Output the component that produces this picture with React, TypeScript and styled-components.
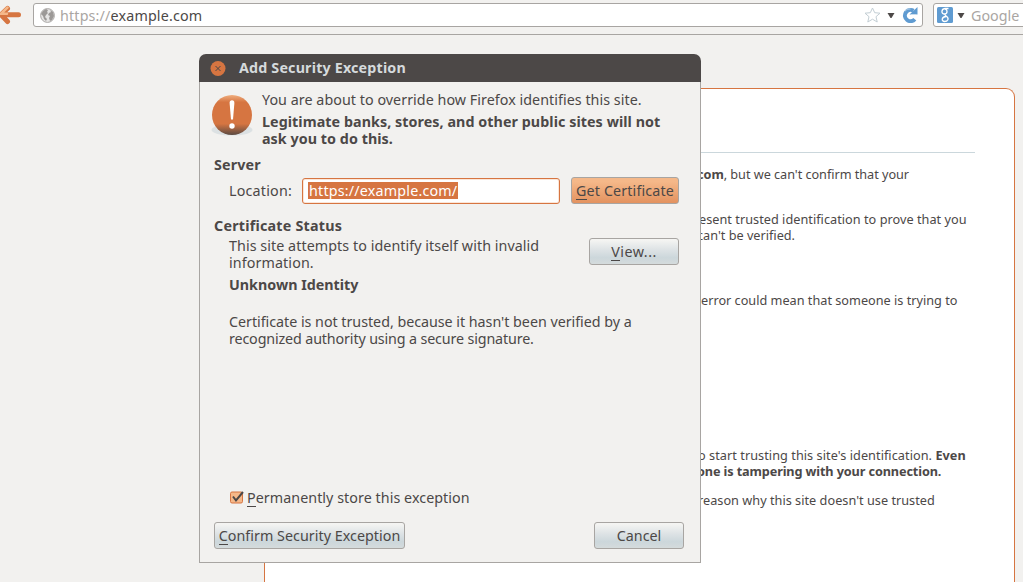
import React from "react";
import styled, { createGlobalStyle, css } from "styled-components";

const color = {
  ink: "#4c4847",
  muted: "#aaa6a3",
  panel: "#f2f1ef",
  orange: "#d67541",
  peach: "#f5b889",
  mist: "#cbd7dc",
  edge: "#a8a5a2",
  blue: "#5f9bd1",
};

const Global = createGlobalStyle`
  body { margin: 0; background: ${color.panel}; overflow: hidden; }
  * { box-sizing: border-box; }
`;

const Screen = styled.div`
  position: relative;
  width: 1023px;
  height: 582px;
  overflow: hidden;
  display: flex;
  flex-direction: column;
  background: ${color.panel};
  color: ${color.ink};
  font-family: "Noto Sans", "Open Sans", sans-serif;
  font-size: 14.3px;
  line-height: 17px;
`;

const Line = styled.div<{ $track?: number; $bold?: boolean; $indent?: number }>`
  white-space: pre;
  font-weight: ${(p) => (p.$bold ? 700 : 400)};
  letter-spacing: ${(p) => p.$track ?? 0}px;
  margin-left: ${(p) => p.$indent ?? 0}px;
`;

const Toolbar = styled.header`
  display: flex;
  flex: none;
  height: 35px;
  padding-top: 3px;
  border-bottom: 1px solid ${color.edge};
`;

const BackArrow = styled.svg`
  width: 22px;
  height: 20px;
  margin: 2px 11px 0 0;
  flex: none;
`;

const Field = styled.div<{ $width: number }>`
  display: flex;
  flex: none;
  align-items: center;
  width: ${(p) => p.$width}px;
  height: 24px;
  background: #fff;
  border: 1px solid ${color.edge};
  border-radius: 3px;
`;

const UrlField = styled(Field)`
  padding: 0 4px 0 6px;
  margin-right: 10px;
`;

const SearchField = styled(Field)`
  padding-left: 3px;
`;

const Muted = styled.span`
  color: ${color.muted};
`;

const Spacer = styled.div`
  flex: 1;
`;

const Glyph = styled.svg<{ $gap?: number }>`
  display: block;
  flex: none;
  margin-right: ${(p) => p.$gap ?? 0}px;
`;

const Page = styled.main`
  flex: 1;
  display: flex;
  padding: 53px 8px 0 264px;
`;

const ErrorCard = styled.section`
  flex: 1;
  background: #fff;
  border: 1px solid ${color.orange};
  border-bottom: 0;
  border-radius: 9px 9px 0 0;
  padding: 63px 39px 0 40px;
  font-size: 12.7px;
  line-height: 16px;
`;

const Heading = styled.div`
  border-top: 1px solid ${color.mist};
  height: 14px;
`;

const Paragraph = styled.div<{ $after: number }>`
  padding-left: 390px;
  margin-bottom: ${(p) => p.$after}px;
`;

const Dialog = styled.section`
  position: absolute;
  left: 199px;
  top: 54px;
  width: 502px;
  height: 509px;
  display: flex;
  flex-direction: column;
`;

const TitleBar = styled.div`
  display: flex;
  align-items: center;
  flex: none;
  height: 28px;
  padding: 0 0 1px 11px;
  background: ${color.ink};
  border-radius: 7px 7px 0 0;
  color: #d5dadc;
`;

const Body = styled.div`
  flex: 1;
  display: flex;
  flex-direction: column;
  padding: 9px 16px 13px 14px;
  background: ${color.panel};
  border: 1px solid ${color.edge};
  border-top: 0;
`;

const Row = styled.div<{ $top?: number }>`
  display: flex;
  margin-top: ${(p) => p.$top ?? 0}px;
`;

const Intro = styled(Row)`
  margin-left: -3px;
  height: 56px;
`;

const IntroText = styled.div`
  display: flex;
  flex-direction: column;
  gap: 5px;
`;

const Block = styled.div<{ $top: number; $indent?: number }>`
  margin-top: ${(p) => p.$top}px;
  margin-left: ${(p) => p.$indent ?? 0}px;
`;

const LocationRow = styled(Row)`
  height: 27px;
  align-items: center;
  padding-left: 15px;
`;

const LocationLabel = styled.div`
  width: 73px;
`;

const LocationInput = styled.div`
  width: 258px;
  height: 26px;
  margin: 1px 11px 0 0;
  padding: 3px 5px 0;
  border: 1px solid ${color.orange};
  border-radius: 3px;
  background: #fff;
  box-shadow: inset 0 0 0 1px #fbe6d8;
`;

const Selection = styled.div`
  width: 150px;
  height: 17px;
  padding-left: 1px;
  background: ${color.orange};
  color: #fff;
`;

const Button = styled.button<{ $width: number; $primary?: boolean }>`
  flex: none;
  width: ${(p) => p.$width}px;
  height: 27px;
  padding: 0;
  display: flex;
  justify-content: center;
  align-items: center;
  border: 1px solid ${color.edge};
  border-radius: 3px;
  color: ${color.ink};
  font: inherit;
  ${(p) =>
    p.$primary
      ? css`
          background: linear-gradient(${color.peach} 15%, #e3925f 100%);
        `
      : css`
          background: linear-gradient(#f4f4f2 5%, #dfe4e6 40%, #ccd7db 75%, #d5dbdc 100%);
        `}
`;

const Key = styled.span`
  box-shadow: 0 -1px 0 ${color.ink} inset;
`;

const StatusText = styled.div`
  width: 360px;
`;

const Warning = () => (
  <Glyph width="42" height="46" viewBox="0 -1 42 46" $gap={9}>
    <defs>
      <linearGradient id="ball" x1="0" y1="0" x2="0" y2="1">
        <stop offset="0" stopColor="#f0ae7e" />
        <stop offset=".18" stopColor="#d67541" />
        <stop offset=".72" stopColor="#d67541" />
        <stop offset="1" stopColor="#5b4a42" />
      </linearGradient>
    </defs>
    <ellipse cx="21" cy="38" rx="20.500" ry="5.500" fill="#dce1e3" />
    <circle cx="21" cy="23" r="20" fill="url(#ball)" />
    <path d="M18.600 11a2.400 2.800 0 0 1 4.800 0L22 27.500h-2z" fill="#fff" />
    <circle cx="21" cy="34" r="2.700" fill="#fff" />
  </Glyph>
);

const DropArrow = ({ gap }: { gap: number }) => (
  <Glyph width="8" height="6" viewBox="0 -.5 8 6" $gap={gap}>
    <path d="M.5.5h7L4.500 5.500h-1z" fill={color.ink} />
  </Glyph>
);

export default function App() {
  return (
    <Screen>
      <Global />
      <Toolbar>
        <BackArrow viewBox="0 0 22 20">
          <path d="M7.500 3.500L1 9.800l6.500 6.700M3 9.800h15.500" fill="none" stroke={color.orange} strokeWidth="5" strokeLinecap="round" strokeLinejoin="round" />
          <path d="M7.500 2.500L1 8.800h6" fill="none" stroke={color.peach} strokeWidth="2.500" strokeLinecap="round" />
        </BackArrow>
        <UrlField $width={890}>
          <Glyph width="15" height="15" viewBox="0 0 15 15" $gap={5}>
            <circle cx="7.500" cy="7.500" r="6.900" fill="#e6e5e4" stroke="#aaa7a5" strokeWidth="1" />
            <path d="M1 6l2-3 3-2 2 1-1 2 1 1-2 2-1 2 2 2-1 2-2-2-1-3zM10 2l3 2 1 4-2 4-2 1-1-3 1-2-2-1 1-2 2-1z" fill="#9c9997" />
          </Glyph>
          <Line $track={0.16}><Muted>https://</Muted>example.com</Line>
          <Spacer />
          <Glyph width="17" height="16" viewBox="0 0 17 16" $gap={6}>
            <path d="M8.500 1l2.200 4.700 5.300.5-4 3.500 1.200 5.300-4.700-2.800L3.800 15 5 9.700 1 6.200l5.300-.5z" fill="#fff" stroke="#c3ced4" />
          </Glyph>
          <DropArrow gap={7} />
          <Glyph width="16" height="16" viewBox="0 0 16 16">
            <path d="M12.800 12.200A5.600 5.600 0 1 1 11.500 3.800" fill="none" stroke={color.blue} strokeWidth="4" />
            <path d="M15.500 0v7.500H7.500z" fill={color.blue} />
            <path d="M3 4.200C4.500 2.300 6.500 1.700 8.500 2M9 7.500h5.500" stroke="#cfe0ee" fill="none" strokeWidth=".8" />
          </Glyph>
        </UrlField>
        <SearchField $width={110}>
          <Glyph width="16" height="16" viewBox="0 0 16 16" $gap={4}>
            <rect width="16" height="16" rx="1.500" fill={color.blue} />
            <path d="M11.500 1.500H8C4 2 4 7 7.500 7c3.500 0 3-5 .5-5M7.500 7l1.500 2c4 2.500 1.500 5.500-1.500 5.500S4 10 9 9.500" fill="none" stroke="#fff" strokeWidth="1.300" />
          </Glyph>
          <DropArrow gap={6} />
          <Line><Muted>Google</Muted></Line>
        </SearchField>
      </Toolbar>

      <Page>
        <ErrorCard>
          <Heading />
          <Paragraph $after={29}>
            <Line $indent={2} $track={-0.04}><b>com</b>, but we can't confirm that your</Line>
          </Paragraph>
          <Paragraph $after={49}>
            <Line $indent={4} $track={0.03}>esent trusted identification to prove that you</Line>
            <Line $indent={2}>can't be verified.</Line>
          </Paragraph>
          <Paragraph $after={139}>
            <Line $indent={6}>error could mean that someone is trying to</Line>
          </Paragraph>
          <Paragraph $after={13}>
            <Line $indent={3} $track={0.05}>o start trusting this site's identification. <b>Even</b></Line>
            <Line $indent={2} $track={-0.12} $bold>one is tampering with your connection.</Line>
          </Paragraph>
          <Paragraph $after={0}>
            <Line $indent={3} $track={0.02}>reason why this site doesn't use trusted</Line>
          </Paragraph>
        </ErrorCard>
      </Page>

      <Dialog>
        <TitleBar>
          <Glyph width="16" height="16" viewBox="0 -.5 16 16" $gap={13}>
            <circle cx="8" cy="8" r="7.500" fill={color.orange} />
            <path d="M5.500 5.500l5 5M10.500 5.500l-5 5" stroke={color.ink} strokeWidth="1" />
          </Glyph>
          <Line $bold $track={0.17}>Add Security Exception</Line>
        </TitleBar>
        <Body>
          <Intro>
            <Warning />
            <IntroText>
              <Line $track={0.04}>You are about to override how Firefox identifies this site.</Line>
              <div>
                <Line $bold $track={0.06}>Legitimate banks, stores, and other public sites will not</Line>
                <Line $bold $track={0.05}>ask you to do this.</Line>
              </div>
            </IntroText>
          </Intro>
          <Block $top={9}><Line $bold $track={0.15}>Server</Line></Block>
          <LocationRow $top={4}>
            <LocationLabel><Line $track={0.2}>Location:</Line></LocationLabel>
            <LocationInput>
              <Selection><Line $track={0.19}>https://example.com/</Line></Selection>
            </LocationInput>
            <Button $width={108} $primary><Line $track={0.14}><Key>G</Key>et Certificate</Line></Button>
          </LocationRow>
          <Block $top={13}><Line $bold $track={0.22}>Certificate Status</Line></Block>
          <Row $top={4}>
            <Block $top={-1} $indent={15}>
              <StatusText>
                <Line $track={0.06}>This site attempts to identify itself with invalid</Line>
                <Line $track={0.1}>information.</Line>
              </StatusText>
            </Block>
            <Button $width={90}><Line $track={0.5}><Key>V</Key>iew...</Line></Button>
          </Row>
          <Block $top={5} $indent={15}><Line $bold>Unknown Identity</Line></Block>
          <Block $top={20} $indent={15}>
            <Line $track={-0.03}>Certificate is not trusted, because it hasn't been verified by a</Line>
            <Line $track={-0.14}>recognized authority using a secure signature.</Line>
          </Block>
          <Spacer />
          <Row>
            <Block $top={0} $indent={16}>
              <Glyph width="14" height="16" viewBox="0 -.5 14 16" $gap={3}>
                <rect x=".5" y="2.500" width="12" height="11" rx="1.500" fill={color.peach} stroke={color.orange} />
                <path d="M3 7l3 4 7-8.500" fill="none" stroke={color.ink} strokeWidth="2" />
              </Glyph>
            </Block>
            <Line $track={0.05}><Key>P</Key>ermanently store this exception</Line>
          </Row>
          <Row $top={16}>
            <Button $width={191}><Line $track={0.03}><Key>C</Key>onfirm Security Exception</Line></Button>
            <Spacer />
            <Button $width={90}><Line>Cancel</Line></Button>
          </Row>
        </Body>
      </Dialog>
    </Screen>
  );
}
